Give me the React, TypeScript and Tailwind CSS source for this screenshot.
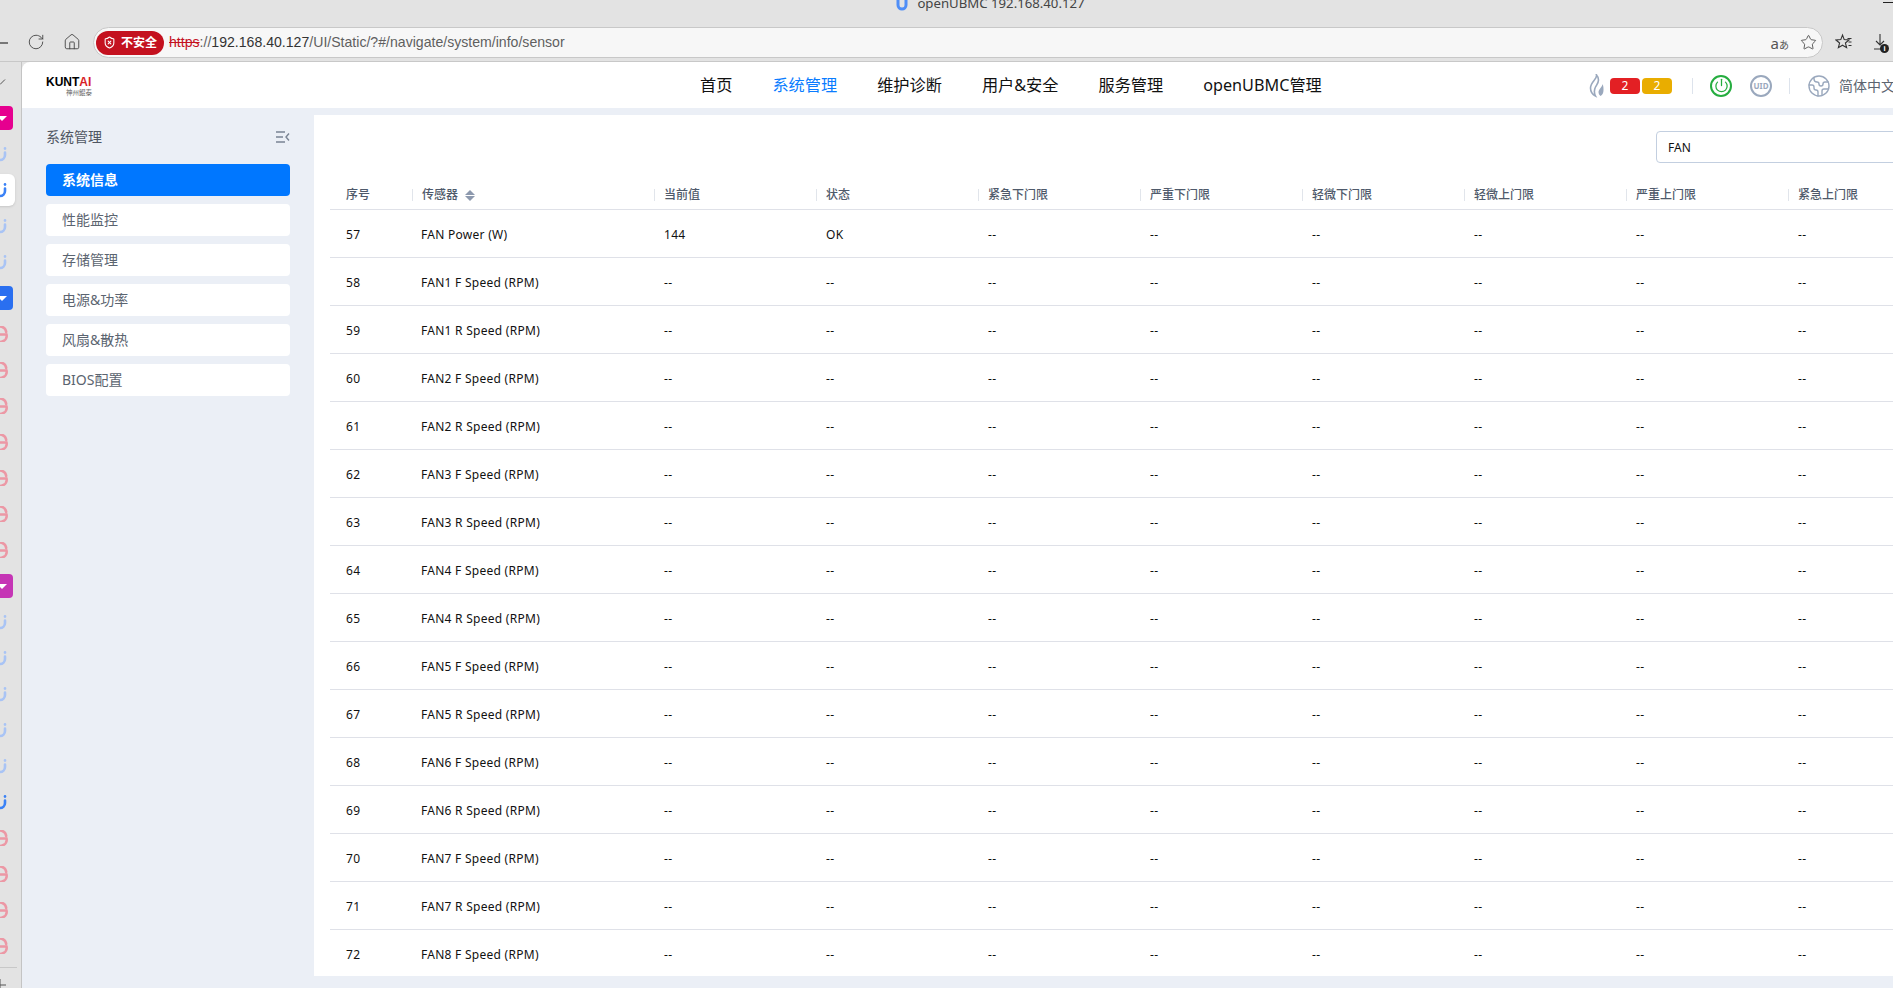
import React from 'react';
import { Home, Power, RotateCw, ShieldX, Star, Earth } from 'lucide-react';

const menu = ['系统信息', '性能监控', '存储管理', '电源&功率', '风扇&散热', 'BIOS配置'];
const nav = ['首页', '系统管理', '维护诊断', '用户&安全', '服务管理', 'openUBMC管理'];
const limits = ['紧急下门限', '严重下门限', '轻微下门限', '轻微上门限', '严重上门限', '紧急上门限'];

const sensors = [
  'FAN Power (W)',
  'FAN1 F Speed (RPM)',
  'FAN1 R Speed (RPM)',
  'FAN2 F Speed (RPM)',
  'FAN2 R Speed (RPM)',
  'FAN3 F Speed (RPM)',
  'FAN3 R Speed (RPM)',
  'FAN4 F Speed (RPM)',
  'FAN4 R Speed (RPM)',
  'FAN5 F Speed (RPM)',
  'FAN5 R Speed (RPM)',
  'FAN6 F Speed (RPM)',
  'FAN6 R Speed (RPM)',
  'FAN7 F Speed (RPM)',
  'FAN7 R Speed (RPM)',
  'FAN8 F Speed (RPM)',
];

// favourites bar down the left edge, cut off by the window
const favourites = [
  'check', 'pink', 'u', 'uWhite', 'u', 'u', 'blue',
  'g', 'g', 'g', 'g', 'g', 'g', 'g',
  'magenta', 'u', 'u', 'u', 'u', 'u', 'uDark',
  'g', 'g', 'g', 'g',
];

const Tile = ({ color }: { color: string }) => (
  <div className={`-ml-[11px] flex h-6 w-6 items-center justify-center rounded ${color}`}>
    <div className="ml-[2px] h-0 w-0 border-x-[5px] border-t-[5px] border-x-transparent border-t-white" />
  </div>
);

const UMark = ({ color }: { color: string }) => (
  <svg viewBox="0 0 16 16" className={`h-4 w-4 shrink-0 ${color}`} fill="none" stroke="currentColor" strokeWidth="2.6" strokeLinecap="round">
    <path d="M13 6.5V9a5 5 0 0 1-10 0" />
    <path d="M13 2.4v.2" />
  </svg>
);

const FavItem = ({ kind }: { kind: string }) => {
  if (kind === 'check') {
    return (
      <svg viewBox="0 0 8 8" className="h-2 w-2 text-[#555]" fill="none" stroke="currentColor" strokeWidth="1">
        <path d="M0 6.5 5 1.5" />
      </svg>
    );
  }
  if (kind === 'pink') return <Tile color="bg-[#e6008f]" />;
  if (kind === 'blue') return <Tile color="bg-[#2a6ff0]" />;
  if (kind === 'magenta') return <Tile color="bg-[#c535b5]" />;
  if (kind === 'u') return <div className="-ml-2"><UMark color="text-[#a9c4f5]" /></div>;
  if (kind === 'uDark') return <div className="-ml-2"><UMark color="text-[#3b82f6]" /></div>;
  if (kind === 'uWhite') {
    return (
      <div className="-ml-[17px] flex h-8 w-8 items-center rounded-md bg-white pl-[9px] shadow-sm">
        <UMark color="text-[#3b82f6]" />
      </div>
    );
  }
  return (
    <svg viewBox="0 0 16 16" className="-ml-2 h-4 w-4 text-[#ec98a5]" fill="none" stroke="currentColor" strokeWidth="2.6" strokeLinecap="round">
      <path d="M3 2.5A6.5 6.5 0 0 1 14.2 6M3 8.5h11.5A6.5 6 0 0 1 3 13.5" />
    </svg>
  );
};

const Toolbar = () => (
  <div className="flex h-[34px] items-start">
    <div className="mt-[15px] h-[1.5px] w-2 bg-[#777]" />
    <RotateCw className="ml-[19px] mt-[6px] h-[18px] w-[18px] text-[#444]" strokeWidth={1.2} />
    <Home className="ml-[18px] mt-[6px] h-[18px] w-[18px] text-[#444]" strokeWidth={1.2} />
    <div className="ml-[12px] flex h-[31px] w-[1730px] items-center rounded-full border border-[#c8c8c8] bg-[#f7f7f7] pl-[2px]">
      <div className="flex h-6 w-[68px] items-center justify-center gap-[5px] rounded-full bg-[#c4111f] text-xs font-bold text-white">
        <ShieldX className="h-[13px] w-[13px]" strokeWidth={2} />
        <span>不安全</span>
      </div>
      <div className="ml-[5px] font-['Liberation_Sans',sans-serif] text-[14.1px] text-[#5f5f5f]">
        <span className="text-[#c4111f] line-through">https</span>
        <span>://</span>
        <span className="text-[#333]">192.168.40.127</span>
        <span>/UI/Static/?#/navigate/system/info/sensor</span>
      </div>
      <div className="ml-auto mr-[11px] flex items-end text-[#555]">
        <span className="text-[15px] leading-4">a</span>
        <span className="text-[10px] leading-3">あ</span>
      </div>
      <Star className="mr-[5px] h-[17px] w-[17px] text-[#444]" strokeWidth={1.2} />
    </div>
    <svg viewBox="0 0 18 18" className="ml-[12px] mt-[6px] h-[18px] w-[18px] text-[#333]" fill="none" stroke="currentColor" strokeWidth="1.1">
      <path d="M7.5 2 9.2 6.6 14 7l-3.6 3 1.2 4.7L7.5 12.2 3.4 14.7 4.6 10 1 7l4.8-.4z" />
      <path d="M12.5 5.5h4M13.5 9h3M13.5 12.5h3" />
    </svg>
    <div className="relative ml-[20px] mt-[6px] h-[18px] w-[14px] text-[#333]">
      <svg viewBox="0 0 14 18" className="h-[18px] w-[14px]" fill="none" stroke="currentColor" strokeWidth="1.1">
        <path d="M7 1v11M3 8l4 4 4-4M1 16h10" />
      </svg>
      <div className="absolute -bottom-[2px] -right-[2px] flex h-[9px] w-[9px] items-center justify-center rounded-full bg-[#222] text-[7px] font-bold leading-none text-white">i</div>
    </div>
  </div>
);

const Header = () => (
  <div className="flex h-[46px] items-center rounded-tl-lg bg-white pl-6 pt-px">
    <div className="flex w-[46px] shrink-0 flex-col items-end pt-[2px]">
      <div className="flex w-[46px] font-['Liberation_Sans',sans-serif] text-[12px] font-bold leading-[10px] text-black">
        <span>KUNT</span><span className="text-[#d81e28]">AI</span>
      </div>
      <div className="mt-[2px] text-[6.5px] leading-[7px] text-[#666]">神州鲲泰</div>
    </div>
    <nav className="ml-[608px] flex w-[623px] shrink-0 gap-10 text-[16.2px] whitespace-nowrap text-[#111]">
      {nav.map((n) => (
        <span key={n} className={n === '系统管理' ? 'text-[#0a7cff]' : ''}>{n}</span>
      ))}
    </nav>
    <svg viewBox="0 0 18 24" className="ml-[264px] mr-[-1px] h-[24px] w-[19px] shrink-0 text-[#9aa8bd]" fill="none" stroke="currentColor" strokeWidth="1.6">
      <path d="M9 1c1 4-6 7-6 13 0 4 3 7 5 8-1-2-2-5 0-9 1-2 3-4 3-7 0-2-1-4-2-5z" />
      <path d="M15 10c0 3-4 5-4 8 0 2 1 3 2 4 2-1 3-3 3-6 0-2 0-4-1-6z" fill="currentColor" stroke="none" />
    </svg>
    <div className="ml-[5px] flex h-4 w-[30px] shrink-0 items-center justify-center rounded-sm bg-[#e32024] text-xs leading-none text-white">2</div>
    <div className="ml-[2px] flex h-4 w-[30px] shrink-0 items-center justify-center rounded-sm bg-[#e9ad00] text-xs leading-none text-white">2</div>
    <div className="ml-5 h-4 w-px shrink-0 bg-[#dde3ec]" />
    <div className="ml-[17px] flex h-[22px] w-[22px] shrink-0 items-center justify-center rounded-full border-2 border-[#25ad3f]">
      <Power className="h-[15px] w-[15px] text-[#25ad3f]" strokeWidth={2} />
    </div>
    <div className="ml-[18px] flex h-[22px] w-[22px] shrink-0 items-center justify-center rounded-full border-2 border-[#9aa8bd] text-[8px] font-bold text-[#9aa8bd]">UID</div>
    <div className="ml-[17px] h-4 w-px shrink-0 bg-[#dde3ec]" />
    <Earth className="ml-[17px] h-[24px] w-[24px] shrink-0 text-[#9aa8bd]" strokeWidth={1.4} />
    <span className="ml-[8px] shrink-0 text-sm text-[#5b6470]">简体中文</span>
  </div>
);

const Sidebar = () => (
  <aside className="w-[292px] shrink-0 px-6 text-sm">
    <div className="flex h-[44px] items-center justify-between text-[#4f5662]">
      <span>系统管理</span>
      <svg viewBox="0 0 14 12" className="h-3 w-[14px] text-[#7a8494]" fill="none" stroke="currentColor" strokeWidth="1.4">
        <path d="M0 1h9M0 6h7M0 11h9M13 2.5 10 6l3 3.5" />
      </svg>
    </div>
    <div className="mt-[5px] flex flex-col gap-2">
      {menu.map((m, i) => (
        <div
          key={m}
          className={`flex h-8 items-center rounded px-4 ${i === 0 ? 'bg-[#0077ff] font-bold text-white' : 'bg-white text-[#5b6470]'}`}
        >
          {m}
        </div>
      ))}
    </div>
  </aside>
);

const SortArrows = () => (
  <div className="ml-[7px] flex flex-col gap-px">
    <div className="h-0 w-0 border-x-[5px] border-b-[5px] border-x-transparent border-b-[#8d99ae]" />
    <div className="h-0 w-0 border-x-[5px] border-t-[5px] border-x-transparent border-t-[#8d99ae]" />
  </div>
);

const HeadCell = ({ label }: { label: string }) => (
  <div className="flex items-center">
    <div className="h-3 w-px bg-[#e1e5eb]" />
    <span className="ml-[9px]">{label}</span>
    {label === '传感器' && <SortArrows />}
  </div>
);

const SensorTable = () => (
  <div className="mt-[13px] w-[1620px] text-xs">
    <div className="grid h-[34px] grid-cols-[82px_242px_repeat(8,162px)] items-center border-b border-[#dfe1e8] pt-[5px] font-medium text-[#4f5a6b]">
      <span className="pl-[16px]">序号</span>
      <HeadCell label="传感器" />
      <HeadCell label="当前值" />
      <HeadCell label="状态" />
      {limits.map((l) => (
        <HeadCell key={l} label={l} />
      ))}
    </div>
    {sensors.map((name, i) => (
      <div key={name} className="grid h-12 grid-cols-[82px_242px_repeat(8,162px)] items-center border-b border-[#dfe1e8] pt-[2px] tracking-[0.27px] text-[#111]">
        <span className="pl-[16px]">{57 + i}</span>
        <span className="pl-[9px]">{name}</span>
        <span className="pl-[10px]">{i === 0 ? '144' : '--'}</span>
        <span className="pl-[10px]">{i === 0 ? 'OK' : '--'}</span>
        {limits.map((l) => (
          <span key={l} className="pl-[10px]">--</span>
        ))}
      </div>
    ))}
  </div>
);

export default function App() {
  return (
    <div className="h-[988px] w-[1893px] overflow-hidden bg-[#e3e3e3] font-['Noto_Sans','Noto_Sans_CJK_SC',sans-serif]">
      <div className="relative flex h-[27px] justify-center">
        <div className="-mt-[5px] ml-[88px] flex h-[18px] items-center gap-[9px] text-[13.2px] text-[#444]">
          <svg viewBox="0 0 12 14" className="h-[14px] w-3 text-[#4f8ef7]" fill="none" stroke="currentColor" strokeWidth="3">
            <path d="M2 0v8a4 4 0 0 0 8 0V0" />
          </svg>
          <span>openUBMC 192.168.40.127</span>
        </div>
        <div className="absolute right-0 top-[2px] h-px w-[10px] bg-[#222]" />
      </div>
      <Toolbar />
      <div className="flex h-[927px] border-t border-[#c8c8c8]">
        <div className="flex h-full w-[22px] shrink-0 flex-col overflow-hidden border-r border-[#c4c4c4] pt-[2px]">
          {favourites.map((kind, i) => (
            <div key={i} className="flex h-9 w-full shrink-0 items-center">
              <FavItem kind={kind} />
            </div>
          ))}
          <div className="mt-[3px] h-px w-[17px] shrink-0 bg-[#c8c8c8]" />
          <svg viewBox="0 0 12 12" className="mt-[11px] h-3 w-3 shrink-0 -translate-x-[6px] text-[#555]" fill="none" stroke="currentColor" strokeWidth="1">
            <path d="M6 0v12M0 6h12" />
          </svg>
        </div>
        <div className="flex h-full w-[1944px] shrink-0 flex-col">
          <Header />
          <div className="flex min-h-0 flex-1 bg-[#ebeff6] pt-[7px]">
            <Sidebar />
            <main className="mb-3 flex-1 overflow-hidden bg-white px-4 pt-4">
              <div className="flex justify-end">
                <div className="flex h-8 w-[294px] items-center rounded-sm border border-[#c3cfe0] pl-[11px] pt-px text-xs text-[#111]">FAN</div>
              </div>
              <SensorTable />
            </main>
          </div>
        </div>
      </div>
    </div>
  );
}
